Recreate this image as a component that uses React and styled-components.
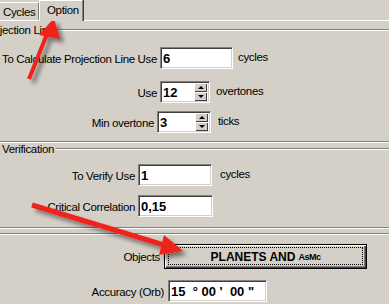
import React from 'react';
import styled, { createGlobalStyle } from 'styled-components';

const GlobalStyle = createGlobalStyle`
  html, body {
    margin: 0;
    padding: 0;
    background: #d4d0c8;
  }
  body {
    font-family: "Liberation Sans", Arial, sans-serif;
    font-size: 11.5px;
    letter-spacing: -0.35px;
    color: #000;
  }
`;

const Window = styled.div`
  position: relative;
  width: 389px;
  height: 304px;
  overflow: hidden;
  background: #d4d0c8;
`;

const TabStrip = styled.div`
  display: flex;
  align-items: flex-end;
  height: 20px;
  border-bottom: 1px solid #fff;
`;

const Tab = styled.div`
  box-sizing: border-box;
  position: relative;
  z-index: ${p => (p.$active ? 1 : 0)};
  width: ${p => p.$w}px;
  height: ${p => (p.$active ? 21 : 18)}px;
  margin-bottom: ${p => (p.$active ? -1 : 0)}px;
  padding: 3px 0 0 ${p => p.$pad}px;
  background: #d4d0c8;
  border-top: 1px solid #fff;
  border-left: ${p => (p.$active ? '1px solid #fff' : 'none')};
  border-right: 1px solid #808080;
  box-shadow: ${p => (p.$active ? '1px 0 0 #404040' : 'none')};
  line-height: 13px;
  white-space: nowrap;
`;

const Rule = styled.div`
  flex: 1;
  height: 0;
  border-top: 1px solid #808080;
  border-bottom: 1px solid #fff;
`;

const Caption = styled.div`
  display: flex;
  align-items: center;
  height: 14px;
  margin-top: ${p => p.$top || 0}px;

  span {
    margin-left: ${p => p.$indent}px;
    padding-right: 2px;
    line-height: 14px;
    white-space: nowrap;
  }
`;

const TopRule = styled(Rule)`
  margin-top: ${p => p.$top}px;
`;

const Group = styled.section`
  border-bottom: ${p => (p.$closed ? '1px solid #808080' : 'none')};
  box-shadow: ${p => (p.$closed ? '0 1px 0 #fff' : 'none')};
  padding-bottom: ${p => p.$pb || 0}px;
`;

const Row = styled.div`
  display: flex;
  align-items: center;
  margin-top: ${p => p.$top}px;
`;

const Label = styled.span`
  flex: none;
  width: ${p => p.$w}px;
  margin-right: ${p => p.$gap}px;
  text-align: right;
  white-space: nowrap;
  padding-top: 1px;
`;

const Suffix = styled.span`
  margin-left: ${p => p.$gap}px;
  margin-top: -2px;
`;

const Field = styled.div`
  box-sizing: border-box;
  display: flex;
  align-items: center;
  width: ${p => p.$w}px;
  height: 22px;
  padding-left: 1px;
  background: #fff;
  border-top: 1px solid #808080;
  border-left: 1px solid #808080;
  border-right: 1px solid #fff;
  border-bottom: 1px solid #fff;
  box-shadow: inset 1px 1px 0 #404040, inset -1px -1px 0 #d4d0c8;
  font-weight: bold;
  font-size: 13px;
  letter-spacing: 0;
  white-space: pre;

  .value {
    flex: 1;
    padding-left: 1px;
  }
`;

const SpinColumn = styled.div`
  display: flex;
  flex-direction: column;
  width: 13px;
  margin-right: 2px;
`;

const SpinButton = styled.div`
  box-sizing: border-box;
  display: flex;
  align-items: center;
  justify-content: center;
  height: 9px;
  background: #d4d0c8;
  box-shadow: inset 1px 1px 0 #fff, inset -1px -1px 0 #404040;

  &::after {
    content: '';
    width: 0;
    height: 0;
    border-left: 3px solid transparent;
    border-right: 3px solid transparent;
    ${p => (p.$down ? 'border-top: 3px solid #000;' : 'border-bottom: 3px solid #000;')}
  }
`;

const PushButton = styled.div`
  box-sizing: border-box;
  position: relative;
  display: flex;
  align-items: center;
  justify-content: center;
  width: 203px;
  height: 25px;
  background: #d4d0c8;
  border: 1px solid #000;
  box-shadow: inset 1px 1px 0 #fff, inset -1px -1px 0 #404040, inset -2px -2px 0 #808080;
  font-weight: bold;
  font-size: 12px;
  letter-spacing: 0;
  padding-top: 1px;

  &::before {
    content: '';
    position: absolute;
    top: 2px;
    left: 3px;
    right: 3px;
    bottom: 3px;
    border: 1px dotted #000;
  }

  small {
    font-size: 9px;
    letter-spacing: -0.5px;
    margin-left: 3px;
  }
`;

const Annotations = styled.svg`
  position: absolute;
  top: 0;
  left: 0;
  pointer-events: none;
`;

const SpinField = ({ w, value }) => (
  <Field $w={w}>
    <span className="value">{value}</span>
    <SpinColumn>
      <SpinButton />
      <SpinButton $down />
    </SpinColumn>
  </Field>
);

const Arrows = () => (
  <Annotations width="389" height="304" viewBox="0 0 389 304">
    <defs>
      <filter id="shade" x="-20%" y="-20%" width="160%" height="160%">
        <feDropShadow dx="4" dy="4" stdDeviation="2" floodColor="#000" floodOpacity="0.45" />
      </filter>
    </defs>
    <g fill="#f0241c" stroke="#f0241c" filter="url(#shade)">
      <line x1="29" y1="79" x2="47" y2="34" strokeWidth="4" />
      <polygon points="54,18 39,35 60,39" stroke="none" />
      <line x1="32" y1="205" x2="164" y2="245" strokeWidth="5" />
      <polygon points="183,251 164,235 159,255" stroke="none" />
    </g>
  </Annotations>
);

export default function App() {
  return (
    <Window>
      <GlobalStyle />
      <TabStrip>
        <Tab $w={39} $pad={3}>Cycles</Tab>
        <Tab $active $w={44} $pad={7}>Option</Tab>
      </TabStrip>

      <Group $closed $pb={8}>
        <Caption $top={2} $indent={-17}>
          <span>Projection Line</span>
          <Rule />
        </Caption>
        <Row $top={10}>
          <Label $w={157} $gap={3}>To Calculate Projection Line Use</Label>
          <Field $w={73}><span className="value">6</span></Field>
          <Suffix $gap={5}>cycles</Suffix>
        </Row>
        <Row $top={12}>
          <Label $w={157} $gap={3}>Use</Label>
          <SpinField w={50} value="12" />
          <Suffix $gap={6}>overtones</Suffix>
        </Row>
        <Row $top={8}>
          <Label $w={154} $gap={3}>Min overtone</Label>
          <SpinField w={54} value="3" />
          <Suffix $gap={7}>ticks</Suffix>
        </Row>
      </Group>

      <Group $closed $pb={10}>
        <Caption $indent={2}>
          <span>Verification</span>
          <Rule />
        </Caption>
        <Row $top={8}>
          <Label $w={135} $gap={3}>To Verify Use</Label>
          <Field $w={74}><span className="value">1</span></Field>
          <Suffix $gap={8}>cycles</Suffix>
        </Row>
        <Row $top={9}>
          <Label $w={135} $gap={3}>Critical Correlation</Label>
          <Field $w={75}><span className="value">0,15</span></Field>
        </Row>
      </Group>

      <Group>
        <TopRule $top={5} />
        <Row $top={9}>
          <Label $w={160} $gap={4}>Objects</Label>
          <PushButton>PLANETS AND<small>AsMc</small></PushButton>
        </Row>
        <Row $top={11}>
          <Label $w={164} $gap={4}>Accuracy (Orb)</Label>
          <Field $w={99}>
            <span className="value">{'15  ° 00 \'  00 "'}</span>
          </Field>
        </Row>
      </Group>

      <Arrows />
    </Window>
  );
}
